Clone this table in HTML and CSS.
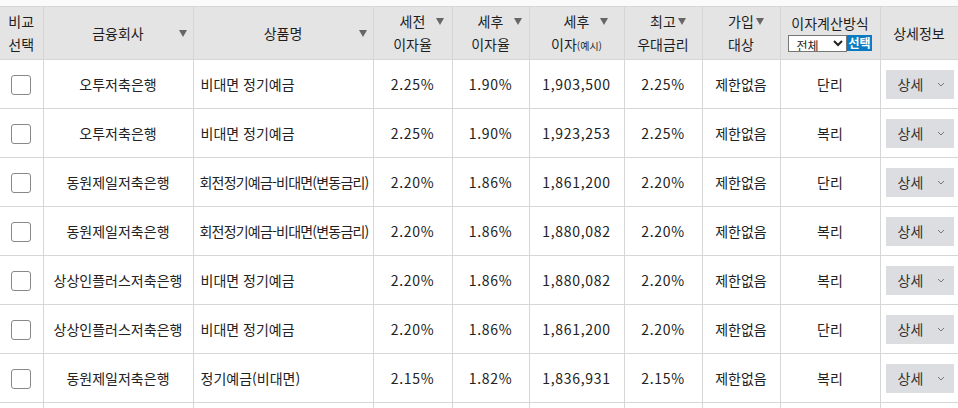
FILE: index.html
```html
<!DOCTYPE html>
<html lang="ko">
<head>
<meta charset="utf-8">
<link rel="stylesheet" href="styles.css">
</head>
<body>
<div class="page">
<table class="grid">
  <colgroup>
    <col class="c-chk"><col class="c-co"><col class="c-prod"><col class="c-rate"><col class="c-rate2"><col class="c-int"><col class="c-max"><col class="c-tgt"><col class="c-calc"><col class="c-det">
  </colgroup>
  <thead>
    <tr>
      <th class="first">비교<br>선택</th>
      <th><div class="hl side"><span></span><span>금융회사</span><i class="tri"></i></div></th>
      <th><div class="hl side"><span></span><span>상품명</span><i class="tri"></i></div></th>
      <th><div class="hl after"><span></span><span>세전</span><i class="tri"></i></div>이자율</th>
      <th><div class="hl after"><span></span><span>세후</span><i class="tri"></i></div>이자율</th>
      <th><div class="hl after"><span></span><span>세후</span><i class="tri"></i></div>이자<small>(예시)</small></th>
      <th><div class="hl tight"><span></span><span>최고</span><i class="tri"></i></div>우대금리</th>
      <th><div class="hl tight"><span></span><span>가입</span><i class="tri"></i></div>대상</th>
      <th class="calc">
        <div class="calc-title">이자계산방식</div>
        <div class="calc-ctl">
          <select class="sel"><option>전체</option><option>단리</option><option>복리</option></select><span class="btn-sel">선택</span>
        </div>
      </th>
      <th>상세정보</th>
    </tr>
  </thead>
  <tbody>
    <tr><td class="first"><span class="cb"></span></td><td>오투저축은행</td><td class="prod">비대면 정기예금</td><td class="num">2.25%</td><td class="num">1.90%</td><td class="num">1,903,500</td><td class="num">2.25%</td><td>제한없음</td><td>단리</td><td class="det"><span class="dbtn">상세<svg width="8" height="5" viewBox="0 0 8 5"><path d="M1 1l3 3 3-3" fill="none" stroke="#777" stroke-width="1"/></svg></span></td></tr>
    <tr><td class="first"><span class="cb"></span></td><td>오투저축은행</td><td class="prod">비대면 정기예금</td><td class="num">2.25%</td><td class="num">1.90%</td><td class="num">1,923,253</td><td class="num">2.25%</td><td>제한없음</td><td>복리</td><td class="det"><span class="dbtn">상세<svg width="8" height="5" viewBox="0 0 8 5"><path d="M1 1l3 3 3-3" fill="none" stroke="#777" stroke-width="1"/></svg></span></td></tr>
    <tr><td class="first"><span class="cb"></span></td><td>동원제일저축은행</td><td class="prod long">회전정기예금-비대면(변동금리)</td><td class="num">2.20%</td><td class="num">1.86%</td><td class="num">1,861,200</td><td class="num">2.20%</td><td>제한없음</td><td>단리</td><td class="det"><span class="dbtn">상세<svg width="8" height="5" viewBox="0 0 8 5"><path d="M1 1l3 3 3-3" fill="none" stroke="#777" stroke-width="1"/></svg></span></td></tr>
    <tr><td class="first"><span class="cb"></span></td><td>동원제일저축은행</td><td class="prod long">회전정기예금-비대면(변동금리)</td><td class="num">2.20%</td><td class="num">1.86%</td><td class="num">1,880,082</td><td class="num">2.20%</td><td>제한없음</td><td>복리</td><td class="det"><span class="dbtn">상세<svg width="8" height="5" viewBox="0 0 8 5"><path d="M1 1l3 3 3-3" fill="none" stroke="#777" stroke-width="1"/></svg></span></td></tr>
    <tr><td class="first"><span class="cb"></span></td><td>상상인플러스저축은행</td><td class="prod">비대면 정기예금</td><td class="num">2.20%</td><td class="num">1.86%</td><td class="num">1,880,082</td><td class="num">2.20%</td><td>제한없음</td><td>복리</td><td class="det"><span class="dbtn">상세<svg width="8" height="5" viewBox="0 0 8 5"><path d="M1 1l3 3 3-3" fill="none" stroke="#777" stroke-width="1"/></svg></span></td></tr>
    <tr><td class="first"><span class="cb"></span></td><td>상상인플러스저축은행</td><td class="prod">비대면 정기예금</td><td class="num">2.20%</td><td class="num">1.86%</td><td class="num">1,861,200</td><td class="num">2.20%</td><td>제한없음</td><td>단리</td><td class="det"><span class="dbtn">상세<svg width="8" height="5" viewBox="0 0 8 5"><path d="M1 1l3 3 3-3" fill="none" stroke="#777" stroke-width="1"/></svg></span></td></tr>
    <tr><td class="first"><span class="cb"></span></td><td>동원제일저축은행</td><td class="prod">정기예금(비대면)</td><td class="num">2.15%</td><td class="num">1.82%</td><td class="num">1,836,931</td><td class="num">2.15%</td><td>제한없음</td><td>복리</td><td class="det"><span class="dbtn">상세<svg width="8" height="5" viewBox="0 0 8 5"><path d="M1 1l3 3 3-3" fill="none" stroke="#777" stroke-width="1"/></svg></span></td></tr>
    <tr class="tail"><td class="first"></td><td></td><td></td><td></td><td></td><td></td><td></td><td></td><td></td><td></td></tr>
  </tbody>
</table>
</div>
</body>
</html>
```
FILE: styles.css
```css
html, body {
  margin: 0;
  padding: 0;
  background: #ffffff;
  overflow: hidden;
}
.page {
  padding-top: 6px;
  background: #fafafa;
  font-family: "Noto Sans CJK KR", "Noto Sans", sans-serif;
  font-size: 14px;
  color: #222;
}
.grid {
  border-collapse: collapse;
  table-layout: fixed;
  width: 958px;
  background: #fff;
}
.c-chk { width: 43px; }
.c-co { width: 150px; }
.c-prod { width: 180px; }
.c-rate { width: 79px; }
.c-rate2 { width: 77px; }
.c-int { width: 95px; }
.c-max { width: 78px; }
.c-tgt { width: 78px; }
.c-calc { width: 100px; }
.c-det { width: 78px; }
.grid th, .grid td {
  border: 1px solid #d6d6d6;
  padding: 0;
  text-align: center;
  vertical-align: middle;
  white-space: nowrap;
  overflow: hidden;
}
.grid th.first, .grid td.first { border-left: none; }
.grid th {
  background: #e4e4e4;
  font-weight: normal;
  height: 52px;
  line-height: 23px;
  color: #1e1e1e;
}
.grid td {
  height: 48px;
  line-height: 20px;
}
.grid tr.tail td { height: 20px; }
.hl {
  display: grid;
  grid-template-columns: 1fr auto 1fr;
  align-items: center;
}
.tri {
  display: inline-block;
  width: 0;
  height: 0;
  border-left: 4px solid transparent;
  border-right: 4px solid transparent;
  border-top: 7px solid #666;
}
.hl.after .tri { justify-self: start; margin-left: 11px; }
.hl.tight .tri { justify-self: start; margin-left: 2px; }
.hl.side .tri { justify-self: end; margin-right: 6px; }
.grid th small {
  font-size: 10px;
}
.calc-title { line-height: 20px; margin-top: -2px; }
.calc-ctl {
  display: flex;
  justify-content: center;
  align-items: center;
  margin-top: 2px;
}
.sel {
  box-sizing: border-box;
  width: 59px;
  height: 17px;
  font-family: "Noto Sans CJK KR", sans-serif;
  font-size: 12px;
  padding: 0 0 0 3px;
  border: 1px solid #767676;
  border-radius: 0;
  background: #fff;
  color: #222;
}
.btn-sel {
  display: inline-block;
  background: #0a7bc3;
  color: #fff;
  font-size: 12px;
  line-height: 16px;
  height: 16px;
  padding: 0 1px;
  font-weight: bold;
}
.grid td.prod { text-align: left; padding-left: 7px; }
.grid td.prod.long { letter-spacing: -0.8px; padding-left: 6px; }
.grid td.num { letter-spacing: 0.7px; }
.cb {
  display: inline-block;
  width: 18px;
  height: 18px;
  border: 1px solid #888;
  border-radius: 3px;
  background: #fff;
  vertical-align: middle;
}
.grid td.det { text-align: left; padding-left: 5px; }
.dbtn {
  display: inline-flex;
  align-items: center;
  justify-content: space-between;
  box-sizing: border-box;
  width: 68px;
  height: 29px;
  padding: 0 9px 0 12px;
  background: #dcdde0;
  color: #333;
  vertical-align: middle;
}
```
